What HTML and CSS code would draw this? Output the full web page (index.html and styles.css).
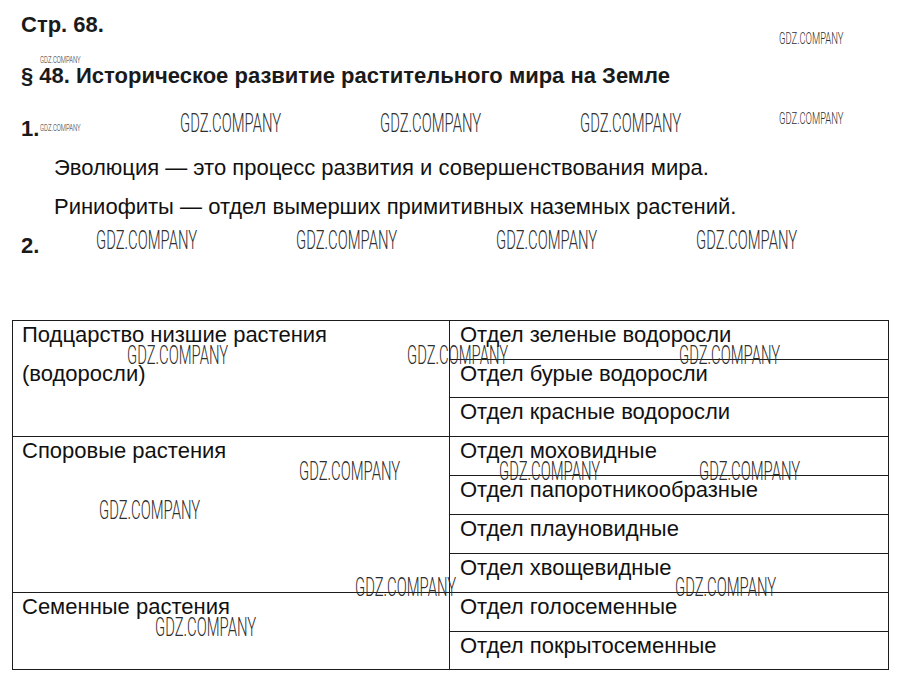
FILE: index.html
```html
<!DOCTYPE html>
<html lang="ru">
<head>
<meta charset="utf-8">
<title>Стр. 68</title>
<link rel="stylesheet" href="styles.css">
</head>
<body>
<div class="page">
  <section class="intro">
    <h1 class="page-no">Стр. 68.</h1>
    <h2 class="topic">§ 48. Историческое развитие растительного мира на Земле</h2>
    <div class="task-no">1.</div>
    <p class="answer">Эволюция — это процесс развития и совершенствования мира.</p>
    <p class="answer">Риниофиты — отдел вымерших примитивных наземных растений.</p>
    <div class="task-no">2.</div>
  </section>

  <table class="plants">
    <colgroup><col class="col-group"><col class="col-div"></colgroup>
    <tr class="row">
      <td class="group" rowspan="3"><div class="group-lines"><span>Подцарство низшие растения</span><span>(водоросли)</span></div></td>
      <td class="div">Отдел зеленые водоросли</td>
    </tr>
    <tr class="row short"><td class="div">Отдел бурые водоросли</td></tr>
    <tr class="row"><td class="div">Отдел красные водоросли</td></tr>
    <tr class="row">
      <td class="group" rowspan="4">Споровые растения</td>
      <td class="div">Отдел моховидные</td>
    </tr>
    <tr class="row"><td class="div">Отдел папоротникообразные</td></tr>
    <tr class="row"><td class="div">Отдел плауновидные</td></tr>
    <tr class="row"><td class="div">Отдел хвощевидные</td></tr>
    <tr class="row">
      <td class="group" rowspan="2">Семенные растения</td>
      <td class="div">Отдел голосеменные</td>
    </tr>
    <tr class="row short"><td class="div">Отдел покрытосеменные</td></tr>
  </table>

  <div class="marks" aria-hidden="true">
    <span class="mark tiny" style="left:40px;top:56px">GDZ.COMPANY</span>
    <span class="mark tiny" style="left:40px;top:124px">GDZ.COMPANY</span>
    <span class="mark small" style="left:779px;top:31px">GDZ.COMPANY</span>
    <span class="mark small" style="left:779px;top:111px">GDZ.COMPANY</span>
    <span class="mark" style="left:180px;top:110px">GDZ.COMPANY</span>
    <span class="mark" style="left:380px;top:110px">GDZ.COMPANY</span>
    <span class="mark" style="left:580px;top:110px">GDZ.COMPANY</span>
    <span class="mark" style="left:96px;top:227px">GDZ.COMPANY</span>
    <span class="mark" style="left:296px;top:227px">GDZ.COMPANY</span>
    <span class="mark" style="left:496px;top:227px">GDZ.COMPANY</span>
    <span class="mark" style="left:696px;top:227px">GDZ.COMPANY</span>
    <span class="mark" style="left:127px;top:342px">GDZ.COMPANY</span>
    <span class="mark" style="left:407px;top:342px">GDZ.COMPANY</span>
    <span class="mark" style="left:679px;top:342px">GDZ.COMPANY</span>
    <span class="mark" style="left:299px;top:458px">GDZ.COMPANY</span>
    <span class="mark" style="left:499px;top:458px">GDZ.COMPANY</span>
    <span class="mark" style="left:699px;top:458px">GDZ.COMPANY</span>
    <span class="mark" style="left:99px;top:497px">GDZ.COMPANY</span>
    <span class="mark" style="left:355px;top:574px">GDZ.COMPANY</span>
    <span class="mark" style="left:675px;top:574px">GDZ.COMPANY</span>
    <span class="mark" style="left:155px;top:614px">GDZ.COMPANY</span>
  </div>
</div>
</body>
</html>
```

FILE: styles.css
```css
* { box-sizing: border-box; }

html, body {
  margin: 0;
  padding: 0;
  background: #ffffff;
}

body {
  font-family: "Liberation Sans", Arial, sans-serif;
  color: #111111;
}

.page {
  position: relative;
  width: 898px;
  height: 687px;
  overflow: hidden;
  padding-top: 5px;
}

.intro {
  padding-left: 21px;
}

.page-no,
.topic {
  margin: 0;
  font-size: 22px;
  font-weight: bold;
  line-height: 39px;
  color: #1a1a1a;
}

.topic {
  margin-top: 12px;
}

.task-no {
  font-size: 22px;
  font-weight: bold;
  line-height: 39px;
  margin-top: 14px;
  color: #1a1a1a;
}

.answer {
  margin: 0 0 0 33px;
  font-size: 22px;
  line-height: 39px;
}

.answer + .task-no {
  margin-top: 0;
}

.plants {
  margin-top: 55px;
  margin-left: 12px;
  width: 876px;
  border-collapse: collapse;
  table-layout: fixed;
  font-size: 22px;
  line-height: 23px;
}

.col-group { width: 437px; }
.col-div { width: 439px; }

.plants td {
  border: 1px solid #1c1c1c;
  vertical-align: top;
  padding: 2px 0 0 10px;
}

.row { height: 39px; }
.row.short { height: 38px; }

.plants td.group {
  padding-left: 9px;
}

.group-lines {
  display: flex;
  flex-direction: column;
  gap: 16px;
}

.marks {
  position: absolute;
  inset: 0;
  pointer-events: none;
}

.mark {
  position: absolute;
  font-family: Roboto, "DejaVu Sans", sans-serif;
  font-weight: 300;
  font-size: 26px;
  line-height: 1;
  color: #2e2e2e;
  white-space: nowrap;
  transform: scaleX(0.57);
  transform-origin: 0 0;
}

.mark.small {
  font-size: 16px;
  transform: scaleX(0.59);
}

.mark.tiny {
  font-size: 8.5px;
  transform: scaleX(0.7);
}
```
